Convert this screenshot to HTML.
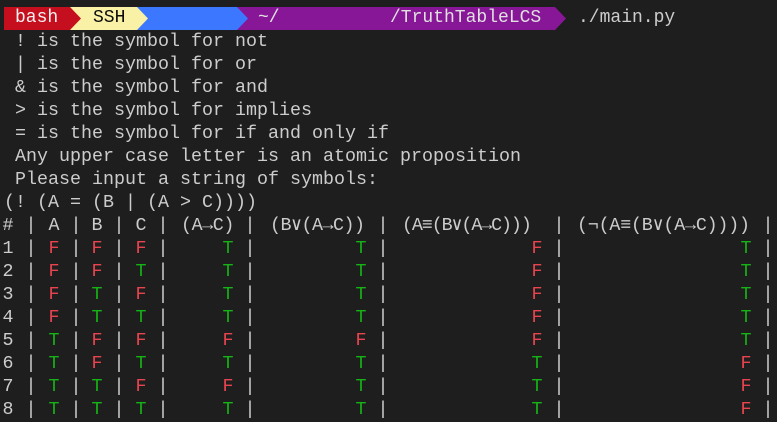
<!DOCTYPE html>
<html><head><meta charset="utf-8"><style>
html,body{margin:0;padding:0;background:#1e1e1e;width:777px;height:422px;overflow:hidden}
body{position:relative;font-family:"Liberation Mono","DejaVu Sans Mono",monospace;font-size:18.33px;color:#cccccc}
.seg{position:absolute;top:7px;height:23px;line-height:23px;white-space:pre;font-size:18px}
pre{position:absolute;left:4px;top:30px;margin:0;font:inherit;line-height:23px;white-space:pre}
.r{color:#e8444f}.g{color:#16b316}
.row{position:absolute;left:0;width:777px;height:23px;line-height:23px}
.row span{position:absolute;width:20px;text-align:center;top:0}
.row b{position:absolute;font-weight:normal;top:0;white-space:pre}
.n{left:-2px}.p1{left:21px}.a{left:44px}.p2{left:66px}.b{left:87px}.p3{left:109px}.c{left:131px}.p4{left:153px}
.d{left:218px}.p5{left:240px}.e{left:351px}.p6{left:373px}.f{left:527px}.p7{left:549px}.gg{left:736px}.p8{left:758px}
</style></head><body>
<svg width="777" height="32" style="position:absolute;left:0;top:0">
<polygon points="237,7 555,7 566,18.5 555,30 237,30" fill="#881798"/>
<polygon points="137,7 237,7 248,18.5 237,30 137,30" fill="#3b78ff"/>
<polygon points="70,7 137,7 148,18.5 137,30 70,30" fill="#f9f1a5"/>
<polygon points="4,7 70,7 81,18.5 70,30 4,30" fill="#c50f1f"/>
</svg>
<div class="seg" style="left:15px;color:#f2f2f2">bash</div>
<div class="seg" style="left:93px;color:#0c0c0c">SSH</div>
<div class="seg" style="left:258px;color:#e0e0e0">~/</div>
<div class="seg" style="left:390px;color:#e0e0e0">/TruthTableLCS</div>
<div class="seg" style="left:578px;color:#cccccc">./main.py</div>
<pre> ! is the symbol for not
 | is the symbol for or
 &amp; is the symbol for and
 &gt; is the symbol for implies
 = is the symbol for if and only if
 Any upper case letter is an atomic proposition
 Please input a string of symbols:
(! (A = (B | (A &gt; C))))</pre>

<div class="row" style="top:214px"><span class="n">#</span><span class="p1">|</span><span class="a">A</span><span class="p2">|</span><span class="b">B</span><span class="p3">|</span><span class="c">C</span><span class="p4">|</span><b style="left:181px;letter-spacing:-0.4px">(A→C)</b><span class="p5">|</span><b style="left:270px;letter-spacing:-0.5px">(B∨(A→C))</b><span class="p6">|</span><b style="left:402px;letter-spacing:-1.1px">(A≡(B∨(A→C)))</b><span class="p7">|</span><b style="left:577px;letter-spacing:-0.2px">(¬(A≡(B∨(A→C))))</b><span class="p8">|</span></div>

<div class="row" style="top:237px"><span class="n">1</span><span class="p1">|</span><span class="a r">F</span><span class="p2">|</span><span class="b r">F</span><span class="p3">|</span><span class="c r">F</span><span class="p4">|</span><span class="d g">T</span><span class="p5">|</span><span class="e g">T</span><span class="p6">|</span><span class="f r">F</span><span class="p7">|</span><span class="gg g">T</span><span class="p8">|</span></div>
<div class="row" style="top:260px"><span class="n">2</span><span class="p1">|</span><span class="a r">F</span><span class="p2">|</span><span class="b r">F</span><span class="p3">|</span><span class="c g">T</span><span class="p4">|</span><span class="d g">T</span><span class="p5">|</span><span class="e g">T</span><span class="p6">|</span><span class="f r">F</span><span class="p7">|</span><span class="gg g">T</span><span class="p8">|</span></div>
<div class="row" style="top:283px"><span class="n">3</span><span class="p1">|</span><span class="a r">F</span><span class="p2">|</span><span class="b g">T</span><span class="p3">|</span><span class="c r">F</span><span class="p4">|</span><span class="d g">T</span><span class="p5">|</span><span class="e g">T</span><span class="p6">|</span><span class="f r">F</span><span class="p7">|</span><span class="gg g">T</span><span class="p8">|</span></div>
<div class="row" style="top:306px"><span class="n">4</span><span class="p1">|</span><span class="a r">F</span><span class="p2">|</span><span class="b g">T</span><span class="p3">|</span><span class="c g">T</span><span class="p4">|</span><span class="d g">T</span><span class="p5">|</span><span class="e g">T</span><span class="p6">|</span><span class="f r">F</span><span class="p7">|</span><span class="gg g">T</span><span class="p8">|</span></div>
<div class="row" style="top:329px"><span class="n">5</span><span class="p1">|</span><span class="a g">T</span><span class="p2">|</span><span class="b r">F</span><span class="p3">|</span><span class="c r">F</span><span class="p4">|</span><span class="d r">F</span><span class="p5">|</span><span class="e r">F</span><span class="p6">|</span><span class="f r">F</span><span class="p7">|</span><span class="gg g">T</span><span class="p8">|</span></div>
<div class="row" style="top:352px"><span class="n">6</span><span class="p1">|</span><span class="a g">T</span><span class="p2">|</span><span class="b r">F</span><span class="p3">|</span><span class="c g">T</span><span class="p4">|</span><span class="d g">T</span><span class="p5">|</span><span class="e g">T</span><span class="p6">|</span><span class="f g">T</span><span class="p7">|</span><span class="gg r">F</span><span class="p8">|</span></div>
<div class="row" style="top:375px"><span class="n">7</span><span class="p1">|</span><span class="a g">T</span><span class="p2">|</span><span class="b g">T</span><span class="p3">|</span><span class="c r">F</span><span class="p4">|</span><span class="d r">F</span><span class="p5">|</span><span class="e g">T</span><span class="p6">|</span><span class="f g">T</span><span class="p7">|</span><span class="gg r">F</span><span class="p8">|</span></div>
<div class="row" style="top:398px"><span class="n">8</span><span class="p1">|</span><span class="a g">T</span><span class="p2">|</span><span class="b g">T</span><span class="p3">|</span><span class="c g">T</span><span class="p4">|</span><span class="d g">T</span><span class="p5">|</span><span class="e g">T</span><span class="p6">|</span><span class="f g">T</span><span class="p7">|</span><span class="gg r">F</span><span class="p8">|</span></div>
</body></html>
